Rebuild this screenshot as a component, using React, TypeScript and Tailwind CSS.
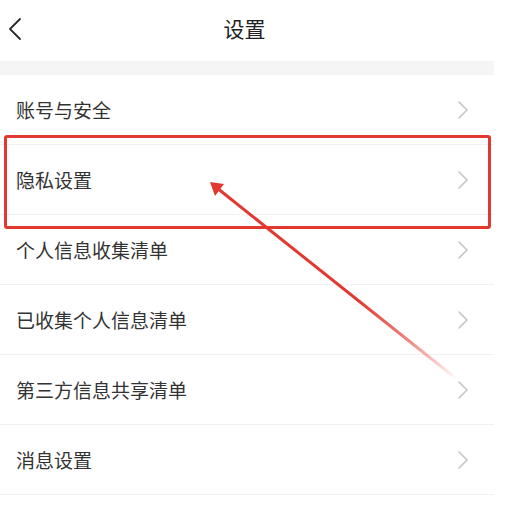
import React from "react";

const items = [
  "账号与安全",
  "隐私设置",
  "个人信息收集清单",
  "已收集个人信息清单",
  "第三方信息共享清单",
  "消息设置",
];

function Chevron() {
  return (
    <svg width="12" height="20" viewBox="0 0 12 20" fill="none">
      <path d="M2 2 L10 10 L2 18" stroke="#c4c4c4" strokeWidth="1.6" strokeLinecap="round" strokeLinejoin="round" />
    </svg>
  );
}

export default function App() {
  return (
    <div
      className="relative w-[514px] h-[506px] bg-white overflow-hidden"
      style={{ fontFamily: '"Noto Sans CJK SC", "Noto Sans", sans-serif' }}
    >
      <div className="w-[494px]">
        <div className="relative h-[61px] flex items-center justify-center">
          <div className="absolute left-[7px] top-[17px]">
            <svg width="16" height="24" viewBox="0 0 16 24" fill="none">
              <path d="M13 2 L3 12 L13 22" stroke="#2b2b2b" strokeWidth="1.8" strokeLinecap="round" strokeLinejoin="round" />
            </svg>
          </div>
          <span className="text-[21px] text-[#222] leading-none -mt-[5px] -ml-[5px]">设置</span>
        </div>
        <div className="h-[14px] bg-[#f5f5f5]" />
        <div className="flex flex-col">
          {items.map((t) => (
            <div key={t} className="h-[70px] flex items-center justify-between pl-[16px] pr-[25px] border-b border-[#f1f1f1]">
              <span className="text-[19px] text-[#333] leading-none">{t}</span>
              <Chevron />
            </div>
          ))}
        </div>
      </div>

      <div className="absolute left-[4px] top-[135px] w-[487px] h-[94px] border-[3px] border-[#e3382f] rounded-[3px]" />

      <svg className="absolute left-0 top-0" width="514" height="506" viewBox="0 0 514 506">
        <defs>
          <linearGradient id="fade" x1="458" y1="380" x2="213" y2="184" gradientUnits="userSpaceOnUse">
            <stop offset="0" stopColor="#e3382f" stopOpacity="0" />
            <stop offset="0.2" stopColor="#e3382f" stopOpacity="0.6" />
            <stop offset="0.4" stopColor="#e3382f" stopOpacity="1" />
            <stop offset="1" stopColor="#e3382f" stopOpacity="1" />
          </linearGradient>
        </defs>
        <line x1="458" y1="380" x2="217" y2="188" stroke="url(#fade)" strokeWidth="3" />
        <polygon points="210,182 224,184 215,196" fill="#e3382f" />
      </svg>
    </div>
  );
}
